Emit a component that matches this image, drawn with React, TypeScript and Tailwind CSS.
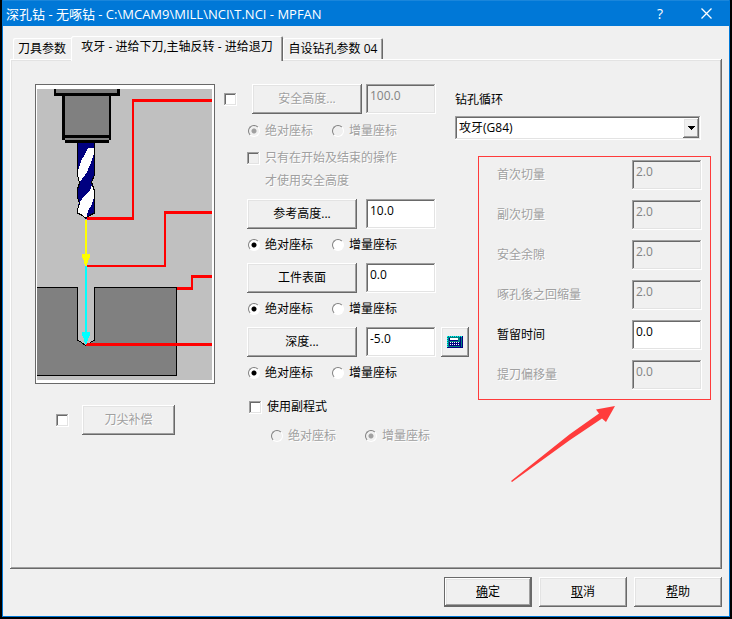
import React, { useState } from "react";
import clsx from "clsx";

const RAISED =
  "bg-[#f0f0f0] shadow-[inset_-1px_-1px_0_#696969,inset_1px_1px_0_#fff,inset_-2px_-2px_0_#a0a0a0,inset_2px_2px_0_#e3e3e3]";
const SUNKEN =
  "shadow-[inset_-1px_-1px_0_#fff,inset_1px_1px_0_#a0a0a0,inset_-2px_-2px_0_#e3e3e3,inset_2px_2px_0_#696969]";
const EMBOSSED = "text-[#a0a0a0] [text-shadow:1px_1px_0_#fff]";

type ButtonProps = React.ButtonHTMLAttributes<HTMLButtonElement>;

function Button({ className, disabled, ...props }: ButtonProps) {
  return (
    <button
      type="button"
      disabled={disabled}
      className={clsx(
        "flex h-[30px] shrink-0 items-center justify-center",
        RAISED,
        disabled && EMBOSSED,
        className
      )}
      {...props}
    />
  );
}

type InputProps = React.InputHTMLAttributes<HTMLInputElement>;

function NumberBox({ disabled, ...props }: InputProps) {
  return (
    <input
      type="text"
      disabled={disabled}
      className={clsx(
        "h-[30px] w-[70px] shrink-0 px-1 pt-[3px] pb-[11px] leading-4 outline-none",
        SUNKEN,
        disabled ? "bg-[#f0f0f0] text-[#838383]" : "bg-white"
      )}
      {...props}
    />
  );
}

function CheckBox({ disabled, grey, ...props }: InputProps & { grey?: boolean }) {
  return (
    <input
      type="checkbox"
      disabled={disabled}
      className={clsx(
        "h-[13px] w-[13px] shrink-0 appearance-none checked:bg-[radial-gradient(circle,#000_3px,transparent_3px)]",
        SUNKEN,
        grey ? "bg-[#f0f0f0]" : "bg-white"
      )}
      {...props}
    />
  );
}

function Radio({ label, disabled, ...props }: InputProps & { label: string }) {
  return (
    <label className={clsx("flex w-[84px] items-center gap-[5px]", disabled && EMBOSSED)}>
      <input
        type="radio"
        disabled={disabled}
        className={clsx(
          "h-3 w-3 shrink-0 appearance-none rounded-full border border-t-[#808080] border-r-white border-b-white border-l-[#808080]",
          disabled
            ? "bg-[#f0f0f0] checked:bg-[radial-gradient(circle,#a0a0a0_2px,transparent_3px)]"
            : "bg-white checked:bg-[radial-gradient(circle,#000_2px,transparent_3px)]"
        )}
        {...props}
      />
      {label}
    </label>
  );
}

function CoordinateMode({
  name,
  initial = "abs",
  disabled,
  className,
}: {
  name: string;
  initial?: string;
  disabled?: boolean;
  className?: string;
}) {
  const [mode, setMode] = useState(initial);

  return (
    <div className={clsx("flex h-4 pl-px", className)}>
      <Radio
        name={name}
        label="绝对座标"
        checked={mode === "abs"}
        disabled={disabled}
        onChange={() => setMode("abs")}
      />
      <Radio
        name={name}
        label="增量座标"
        checked={mode === "inc"}
        disabled={disabled}
        onChange={() => setMode("inc")}
      />
    </div>
  );
}

function CalculatorIcon() {
  return (
    <svg width="16" height="12" viewBox="0 0 16 12" shapeRendering="crispEdges" aria-hidden="true">
      <rect width="16" height="12" fill="#000080" />
      <rect width="15" height="11" fill="#008080" />
      <path d="M0 .5h15M.5 0v11" stroke="#00ffff" strokeDasharray="1 1" />
      <rect x="2" y="2" width="9" height="3" fill="#000080" />
      <rect x="3" y="2" width="8" height="2" fill="#fff" />
      <rect x="2" y="6" width="11" height="4" fill="#000080" />
      <path d="M3 6.500h9M3 8.500h9" stroke="#fff" strokeDasharray="1 1" />
      <rect x="13" y="1" width="1" height="10" fill="#000080" />
    </svg>
  );
}

function DrillDiagram() {
  return (
    <svg
      viewBox="0 0 175 291"
      className="block h-[291px] w-[175px] bg-[#c0c0c0]"
      shapeRendering="crispEdges"
      role="img"
    >
      {/* spindle */}
      <rect x="17" y="0" width="66" height="7" />
      <rect x="19" y="0" width="61" height="4" fill="#808080" />
      <path d="M25 7h49v44h-2v3H28v-3h-3z" />
      <rect x="28" y="7" width="44" height="39" fill="#808080" />
      <rect x="28" y="49" width="44" height="2" fill="#808080" />
      {/* drill bit */}
      <path
        d="M40 54h18v32l-3 7 3 9v22l-5 3-4 3-4-3-5-3v-3l2-8-2-5v-8l2-6-2-8z"
        fill="#000080"
      />
      <path
        d="M51 59h6v6l-4 11-3 7-7 10-2-6v-5l3-10 4-7zM55 96l2 6v7l-3 8-3 5-2 8-8-6v-3l2-8 5-7 5-5z"
        fill="#fff"
      />
      <path
        d="M40.5 54v32l2 8-2 6v8l2 7-2 5v4l4 2 4 3 5-3 4-2v-22l-3-9 3-7V54"
        fill="none"
        stroke="#000"
      />
      {/* workpiece */}
      <path
        d="M0 198.500H40.500V251.500L44 253L49 257L54 253L57.500 251.500V198.500H139.500V286.500H0"
        fill="#808080"
        stroke="#000"
      />
      {/* tool paths */}
      <g fill="#f00">
        <path d="M95 10h80v3H97v118H50v-3h45z" />
        <path d="M127 122h48v3h-46v53H50v-2h77z" />
        <path d="M154 186h21v3h-19v12h-16v-3h14z" />
        <path d="M49 254h126v3H49z" />
      </g>
      <path d="M48 131h2v34h3v3l-2 4-1 5h-2l-1-5-2-4v-3h3z" fill="#ff0" />
      <path d="M48 177h2v66h3v3l-2 4-1 5h-2l-1-5-2-4v-3h3z" fill="#0ff" />
    </svg>
  );
}

function TitleBar() {
  return (
    <div className="flex h-[26px] shrink-0 items-center border-t border-[#1a86db] bg-[#0078d7] pl-[3px] text-white">
      <h1 className="grow text-[13px]">深孔钻 - 无啄钻 - C:\MCAM9\MILL\NCI\T.NCI - MPFAN</h1>
      <button type="button" className="h-full w-[46px] text-sm">
        ?
      </button>
      <button type="button" className="flex h-full w-[46px] items-center justify-center" aria-label="关闭">
        <svg width="11" height="11" viewBox="0 0 11 11" stroke="#fff" strokeWidth="1.300" fill="none">
          <path d="M.5.5l10 10M10.500.5l-10 10" />
        </svg>
      </button>
    </div>
  );
}

const TAB =
  "shrink-0 rounded-t-xs bg-[#f0f0f0] whitespace-nowrap shadow-[inset_1px_1px_0_#fff,inset_-1px_0_0_#696969,inset_-2px_0_0_#a0a0a0]";

function Tabs() {
  return (
    <div className="flex items-end pl-[3px]">
      <button type="button" className="h-[21px] w-[58px] shrink-0 rounded-tl-xs text-center shadow-[inset_1px_1px_0_#fff]">
        刀具参数
      </button>
      <button type="button" className={clsx(TAB, "z-10 -mb-0.5 h-[25px] w-[212px] pb-1")}>
        攻牙 - 进给下刀,主轴反转 - 进给退刀
      </button>
      <button type="button" className={clsx(TAB, "h-[21px] w-[100px]")}>
        自设钻孔参数 04
      </button>
    </div>
  );
}

function Heights() {
  return (
    <div className="flex w-[208px] shrink-0 flex-col">
      <div className="flex w-[189px] justify-between pl-[5px]">
        <Button className="w-[110px]" disabled>
          安全高度...
        </Button>
        <NumberBox defaultValue="100.0" aria-label="安全高度" disabled />
      </div>
      <CoordinateMode name="clearance" className="mt-[9px]" disabled />
      <label className={clsx("mt-[11px] flex items-start gap-[5px]", EMBOSSED)}>
        <span className="flex h-4 items-center">
          <CheckBox disabled grey />
        </span>
        <span className="flex flex-col gap-[7px]">
          <span>只有在开始及结束的操作</span>
          <span>才使用安全高度</span>
        </span>
      </label>

      <div className="mt-2.5 flex w-[189px] justify-between">
        <Button className="w-[110px]">参考高度...</Button>
        <NumberBox defaultValue="10.0" aria-label="参考高度" />
      </div>
      <CoordinateMode name="retract" className="mt-2" />

      <div className="mt-2.5 flex w-[189px] justify-between">
        <Button className="w-[110px]">工件表面</Button>
        <NumberBox defaultValue="0.0" aria-label="工件表面" />
      </div>
      <CoordinateMode name="stock" className="mt-2" />

      <div className="mt-2.5 flex gap-[5px]">
        <div className="flex w-[189px] shrink-0 justify-between">
          <Button className="w-[110px]">深度...</Button>
          <NumberBox defaultValue="-5.0" aria-label="深度" />
        </div>
        <Button className="w-7" aria-label="计算">
          <CalculatorIcon />
        </Button>
      </div>
      <CoordinateMode name="depth" className="mt-2" />

      <label className="mt-[18px] flex items-center gap-[5px] pl-0.5">
        <CheckBox />
        使用副程式
      </label>
      <CoordinateMode name="subprogram" initial="inc" className="mt-[13px] ml-[23px] gap-[10px]" disabled />
    </div>
  );
}

const cycleParams = [
  { id: "first-peck", label: "首次切量", value: "2.0", disabled: true },
  { id: "next-peck", label: "副次切量", value: "2.0", disabled: true },
  { id: "peck-clearance", label: "安全余隙", value: "2.0", disabled: true },
  { id: "retract-amount", label: "啄孔後之回缩量", value: "2.0", disabled: true },
  { id: "dwell", label: "暂留时间", value: "0.0", disabled: false },
  { id: "shift", label: "提刀偏移量", value: "0.0", disabled: true },
];

function DrillCycle() {
  return (
    <div className="flex min-w-0 grow flex-col pt-2">
      <label htmlFor="cycle">钻孔循环</label>
      <div className={clsx("relative mt-2 mr-2.5 h-6 bg-white p-0.5", SUNKEN)}>
        <select id="cycle" className="block h-full w-full appearance-none bg-transparent pl-0.5 outline-none">
          <option>攻牙(G84)</option>
        </select>
        <span
          className={clsx(
            "pointer-events-none absolute top-0.5 right-0.5 flex h-5 w-4 items-center justify-center",
            RAISED
          )}
        >
          <svg width="7" height="4" viewBox="0 0 7 4" shapeRendering="crispEdges">
            <path d="M0 0h7v1H6v1H5v1H4v1H3V3H2V2H1V1H0z" />
          </svg>
        </span>
      </div>

      <div className="mt-4 ml-[23px] flex flex-col gap-2.5 border border-[#ff3b3b] pt-[3px] pr-2 pb-[9px] pl-[18px]">
        {cycleParams.map(({ id, label, value, disabled }) => (
          <div key={id} className="flex items-center justify-between">
            <label htmlFor={id} className={clsx(disabled && EMBOSSED)}>
              {label}
            </label>
            <NumberBox id={id} defaultValue={value} disabled={disabled} />
          </div>
        ))}
      </div>

      <svg className="mt-[5px] ml-[55px]" width="106" height="78" viewBox="0 0 106 78" fill="#ff3b3b">
        <path d="M105 1L86 4.500L89 8.500L60 29L1 76L2 77L60 35L92 13.500L96 17Z" />
      </svg>
    </div>
  );
}

export default function App() {
  return (
    <div className="flex min-h-screen flex-col bg-black px-0.5 pb-0.5 font-['Open_Sans','Noto_Sans_CJK_SC',sans-serif] text-xs leading-4 text-black">
      <div className="flex grow flex-col border-x border-b border-[#0078d7] bg-[#f0f0f0]">
        <TitleBar />
        <div className="flex grow flex-col px-[7px] pt-2.5 pb-[9px]">
          <Tabs />
          <div className={clsx("flex grow items-start pt-[25px] pr-[11px] pb-4 pl-[25px]", RAISED)}>
            <div className="shrink-0">
              <div className="border border-[#696969] bg-white pt-1 pr-0.5 pb-[3px] pl-px">
                <DrillDiagram />
              </div>
              <div className="mt-[21px] flex items-center gap-[13px] pl-[21px]">
                <CheckBox aria-label="刀尖补偿" />
                <Button className="w-[93px]" disabled>
                  刀尖补偿
                </Button>
              </div>
            </div>
            <div className="mt-[9px] mr-2.5 ml-[9px] flex shrink-0">
              <CheckBox aria-label="安全高度" />
            </div>
            <Heights />
            <DrillCycle />
          </div>
          <div className="mt-2 flex justify-end gap-[7px]">
            <Button className="w-[88px] border border-[#696969]">
              <span className="underline">确</span>定
            </Button>
            <Button className="w-[88px]">
              <span className="underline">取</span>消
            </Button>
            <Button className="w-[88px]">
              <span className="underline">帮</span>助
            </Button>
          </div>
        </div>
      </div>
    </div>
  );
}
